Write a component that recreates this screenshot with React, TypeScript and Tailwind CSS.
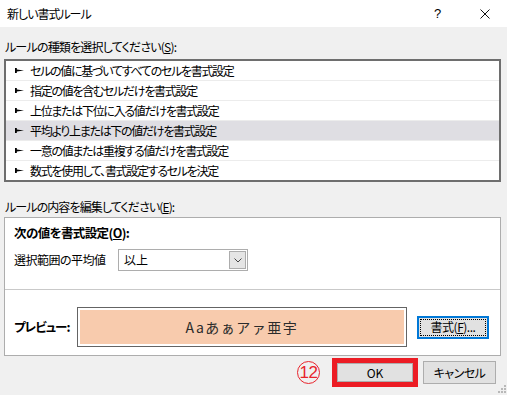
import React from 'react';

const FONT = '"Noto Sans CJK JP", "Liberation Sans", sans-serif';

const rules = [
  'セルの値に基づいてすべてのセルを書式設定',
  '指定の値を含むセルだけを書式設定',
  '上位または下位に入る値だけを書式設定',
  '平均より上または下の値だけを書式設定',
  '一意の値または重複する値だけを書式設定',
  '数式を使用して、書式設定するセルを決定',
];

function RuleArrow() {
  return (
    <svg width="9" height="5" viewBox="0 0 9 5" className="shrink-0">
      <path d="M0 0h1.8v1.5L9 2.5L1.8 3.5V5H0Z" fill="#000" />
    </svg>
  );
}

function Grip() {
  return (
    <svg width="8" height="8" viewBox="0 0 8 8">
      {[
        [6, 0],
        [3, 3],
        [6, 3],
        [0, 6],
        [3, 6],
        [6, 6],
      ].map(([x, y]) => (
        <rect key={`${x}-${y}`} x={x} y={y} width="2" height="2" fill="#b8b8b8" />
      ))}
    </svg>
  );
}

export default function App() {
  const selected = 3;

  return (
    <div
      className="w-[507px] h-[395px] bg-[#f0f0f0] text-[12px] text-black overflow-hidden flex flex-col"
      style={{ fontFamily: FONT, fontFeatureSettings: '"palt"' }}
    >
      {/* Title bar */}
      <div className="h-[27px] bg-white flex items-center shrink-0">
        <span className="pl-[7px] flex-1 leading-none tracking-[-1px]">新しい書式ルール</span>
        <span className="w-[10px] text-[13px] leading-none mr-[36px]" style={{ fontFamily: '"Liberation Sans", sans-serif' }}>
          ?
        </span>
        <svg width="10" height="10" viewBox="0 0 10 10" className="mr-[17px]">
          <path d="M0.5 0.5L9.5 9.5M9.5 0.5L0.5 9.5" stroke="#111" strokeWidth="1" />
        </svg>
      </div>

      <div className="pl-[4px] pr-[6px] flex flex-col">
        {/* Rule type */}
        <div className="pt-[12px] h-[32px] pl-[1px] leading-[16px] tracking-[-0.8px]">
          ルールの種類を選択してください(<span className="underline">S</span>):
        </div>
        <div className="border-2 border-[#6e6e6e] bg-white">
          {rules.map((rule, i) => (
            <div
              key={rule}
              className={`h-[20px] flex items-center gap-[6px] pl-[9px] border-b border-[#ececec] last:border-b-0 last:h-[19px] ${
                i === selected ? 'bg-[#dfdee3]' : ''
              }`}
            >
              <RuleArrow />
              <span className="leading-none tracking-[-1.3px]">{rule}</span>
            </div>
          ))}
        </div>

        {/* Rule description */}
        <div className="pt-[17px] h-[35px] pl-[1px] leading-[16px] tracking-[-0.9px]">
          ルールの内容を編集してください(<span className="underline">E</span>):
        </div>
        <div className="border border-[#adadad] bg-white h-[139px] flex flex-col">
          <div className="h-[72px] border-b border-[#c9c9c9] pl-[9px] pt-[7px]">
            <div className="font-bold leading-[16px] text-[12.5px] tracking-[-0.6px]">
              次の値を書式設定(<span className="underline">O</span>):
            </div>
            <div className="flex items-center mt-[8px]">
              <span className="w-[104px] leading-none tracking-[-0.5px]">選択範囲の平均値</span>
              <div className="w-[130px] h-[22px] border border-[#adadad] bg-white flex items-center justify-between pl-[5px] pr-[1px]">
                <span className="leading-none">以上</span>
                <div className="w-[17px] h-[18px] bg-[#e5e5e5] border border-[#acacac] flex items-center justify-center">
                  <svg width="8" height="5" viewBox="0 0 8 5">
                    <path d="M0.5 0.5L4 4L7.5 0.5" fill="none" stroke="#444" strokeWidth="1" />
                  </svg>
                </div>
              </div>
            </div>
          </div>
          <div className="flex items-center pl-[9px] pt-[17px]">
            <span className="w-[63px] leading-none font-bold text-[12.5px] tracking-[-1px]">プレビュー:</span>
            <div className="w-[330px] h-[40px] border border-[#646464] bg-white p-[2px]">
              <div className="h-full bg-[#f8cbad] flex items-center justify-center text-[14px] tracking-[1.5px] text-[#2b2b2b]" style={{ fontFeatureSettings: 'normal' }}>
                Aaあぁアァ亜宇
              </div>
            </div>
            <button className="ml-[10px] w-[72px] h-[23px] border-2 border-[#0078d7] bg-[#e1e1e1] p-[1px]">
              <div className="h-full border border-dotted border-black flex items-center justify-center leading-none tracking-[-0.5px]">
                書式(<span className="underline">F</span>)...
              </div>
            </button>
          </div>
        </div>
      </div>

      {/* Bottom buttons */}
      <div className="flex items-center pl-[297px] pt-[2px] relative">
        <div className="w-[23px] h-[23px] rounded-full border-[1.5px] border-[#e8242c] flex items-center justify-center text-[#e8242c] text-[17px] leading-none tracking-[-0.5px]" style={{ fontFamily: '"Liberation Sans", sans-serif' }}>
          12
        </div>
        <div className="ml-[12px] w-[86px] h-[29px] border-[5px] border-[#ec1c24]">
          <button className="w-full h-full bg-[#e1e1e1] border border-[#adadad] flex items-center justify-center leading-none">
            OK
          </button>
        </div>
        <button className="ml-[5px] w-[73px] h-[23px] bg-[#e1e1e1] border border-[#adadad] flex items-center justify-center leading-none tracking-[-0.5px]">
          キャンセル
        </button>
        <div className="absolute right-[1px] bottom-[-6px]">
          <Grip />
        </div>
      </div>
    </div>
  );
}
